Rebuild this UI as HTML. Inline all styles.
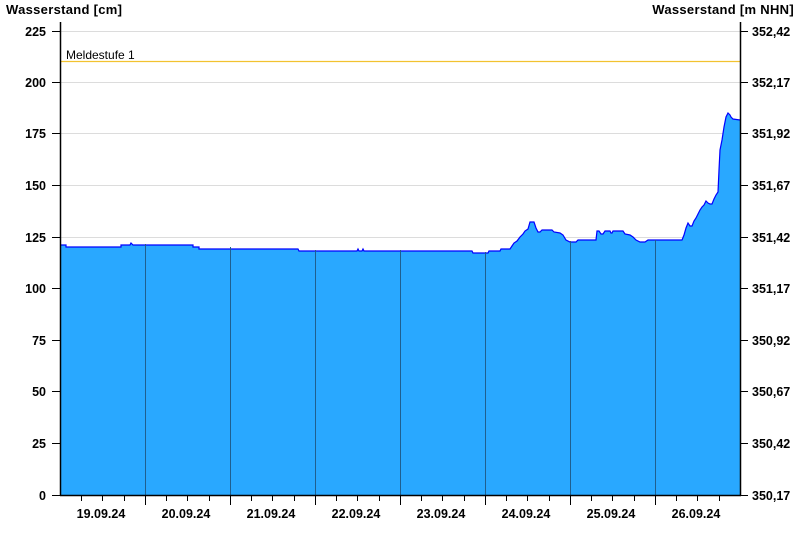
<!DOCTYPE html>
<html><head><meta charset="utf-8"><style>
html,body{margin:0;padding:0;background:#fff}
svg{display:block;font-family:"Liberation Sans",Arial,sans-serif}
</style></head><body>
<svg width="800" height="550" viewBox="0 0 800 550">
<g stroke="#dcdcdc" stroke-width="1">
<line x1="60" y1="31.5" x2="740" y2="31.5"/>
<line x1="60" y1="82.5" x2="740" y2="82.5"/>
<line x1="60" y1="133.5" x2="740" y2="133.5"/>
<line x1="60" y1="185.5" x2="740" y2="185.5"/>
<line x1="60" y1="237.5" x2="740" y2="237.5"/>
</g>
<line x1="60" y1="61.5" x2="740" y2="61.5" stroke="#f2c230" stroke-width="1.2"/>
<text x="66" y="59" font-size="12" fill="#000">Meldestufe 1</text>
<polygon fill="#29a8ff" stroke="none" points="60,495 60,245 66,245 66,247 121,247 121,245 130,245 131,243 133,245 193,245 193,247 199,247 199,249 298,249 299,251 357,251 358,249 359,251 362,251 363,249 364,251 472,251 473,253 488,253 489,251 500,251 501,249 510,249 512,246 514,243 517,241 520,237 523,234 525,231 528,229 530,222 534,222 536,228 538,232 540,232 542,230 552,230 554,232 560,233 563,235 566,240 570,242 576,242 578,240 596,240 597,231 599,231 601,234 603,234 605,231 610,231 611,233 612,233 613,231 623,231 625,234 630,235 633,237 636,240 640,242 645,242 648,240 682,240 684,235 686,228 688,223 690,226 692,226 694,221 696,218 698,214 700,210 702,207 704,205 706,201 708,203 710,204 712,204 714,199 716,195 718,192 719,170 720,150 722,140 724,127 726,117 728,113 730,115 731,117 733,119 740,120 740,495"/>
<polyline fill="none" stroke="#0000ff" stroke-width="1.2" points="60,245 66,245 66,247 121,247 121,245 130,245 131,243 133,245 193,245 193,247 199,247 199,249 298,249 299,251 357,251 358,249 359,251 362,251 363,249 364,251 472,251 473,253 488,253 489,251 500,251 501,249 510,249 512,246 514,243 517,241 520,237 523,234 525,231 528,229 530,222 534,222 536,228 538,232 540,232 542,230 552,230 554,232 560,233 563,235 566,240 570,242 576,242 578,240 596,240 597,231 599,231 601,234 603,234 605,231 610,231 611,233 612,233 613,231 623,231 625,234 630,235 633,237 636,240 640,242 645,242 648,240 682,240 684,235 686,228 688,223 690,226 692,226 694,221 696,218 698,214 700,210 702,207 704,205 706,201 708,203 710,204 712,204 714,199 716,195 718,192 719,170 720,150 722,140 724,127 726,117 728,113 730,115 731,117 733,119 740,120"/>
<g stroke="#1f5f8f" stroke-width="1">
<line x1="145.5" y1="244" x2="145.5" y2="495"/>
<line x1="230.5" y1="247" x2="230.5" y2="495"/>
<line x1="315.5" y1="250" x2="315.5" y2="495"/>
<line x1="400.5" y1="250" x2="400.5" y2="495"/>
<line x1="485.5" y1="252" x2="485.5" y2="495"/>
<line x1="570.5" y1="241" x2="570.5" y2="495"/>
<line x1="655.5" y1="240" x2="655.5" y2="495"/>
</g>
<g stroke="#000" stroke-width="1.5">
<line x1="60.5" y1="22" x2="60.5" y2="496"/>
<line x1="740.5" y1="22" x2="740.5" y2="496"/>
<line x1="60" y1="495.5" x2="741" y2="495.5"/>
</g>
<g stroke="#000" stroke-width="1">
<path d="M52 31.5H60M52 82.5H60M52 133.5H60M52 185.5H60M52 237.5H60M52 288.5H60M52 340.5H60M52 391.5H60M52 443.5H60M52 495.5H60"/>
<path d="M740 31.5H748M740 82.5H748M740 133.5H748M740 185.5H748M740 237.5H748M740 288.5H748M740 340.5H748M740 391.5H748M740 443.5H748M740 495.5H748"/>
<path d="M81.5 495V501M102.5 495V501M124.5 495V501M145.5 495V505M166.5 495V501M187.5 495V501M209.5 495V501M230.5 495V505M251.5 495V501M272.5 495V501M294.5 495V501M315.5 495V505M336.5 495V501M357.5 495V501M379.5 495V501M400.5 495V505M421.5 495V501M442.5 495V501M464.5 495V501M485.5 495V505M506.5 495V501M527.5 495V501M549.5 495V501M570.5 495V505M591.5 495V501M612.5 495V501M634.5 495V501M655.5 495V505M676.5 495V501M697.5 495V501M719.5 495V501"/>
</g>
<g font-size="12.5" font-weight="bold" fill="#000">
<text x="6" y="14" font-size="13" letter-spacing="0.3">Wasserstand [cm]</text>
<text x="794" y="14" text-anchor="end" font-size="13" letter-spacing="0.3">Wasserstand [m NHN]</text>
<g text-anchor="end">
<text x="46" y="36">225</text><text x="46" y="87">200</text><text x="46" y="138">175</text><text x="46" y="190">150</text><text x="46" y="242">125</text><text x="46" y="293">100</text><text x="46" y="345">75</text><text x="46" y="396">50</text><text x="46" y="448">25</text><text x="46" y="500">0</text>
</g>
<g>
<text x="752" y="36">352,42</text><text x="752" y="87">352,17</text><text x="752" y="138">351,92</text><text x="752" y="190">351,67</text><text x="752" y="242">351,42</text><text x="752" y="293">351,17</text><text x="752" y="345">350,92</text><text x="752" y="396">350,67</text><text x="752" y="448">350,42</text><text x="752" y="500">350,17</text>
</g>
<g text-anchor="middle">
<text x="101" y="518">19.09.24</text><text x="186" y="518">20.09.24</text><text x="271" y="518">21.09.24</text><text x="356" y="518">22.09.24</text><text x="441" y="518">23.09.24</text><text x="526" y="518">24.09.24</text><text x="611" y="518">25.09.24</text><text x="696" y="518">26.09.24</text>
</g>
</g>
</svg>
</body></html>
